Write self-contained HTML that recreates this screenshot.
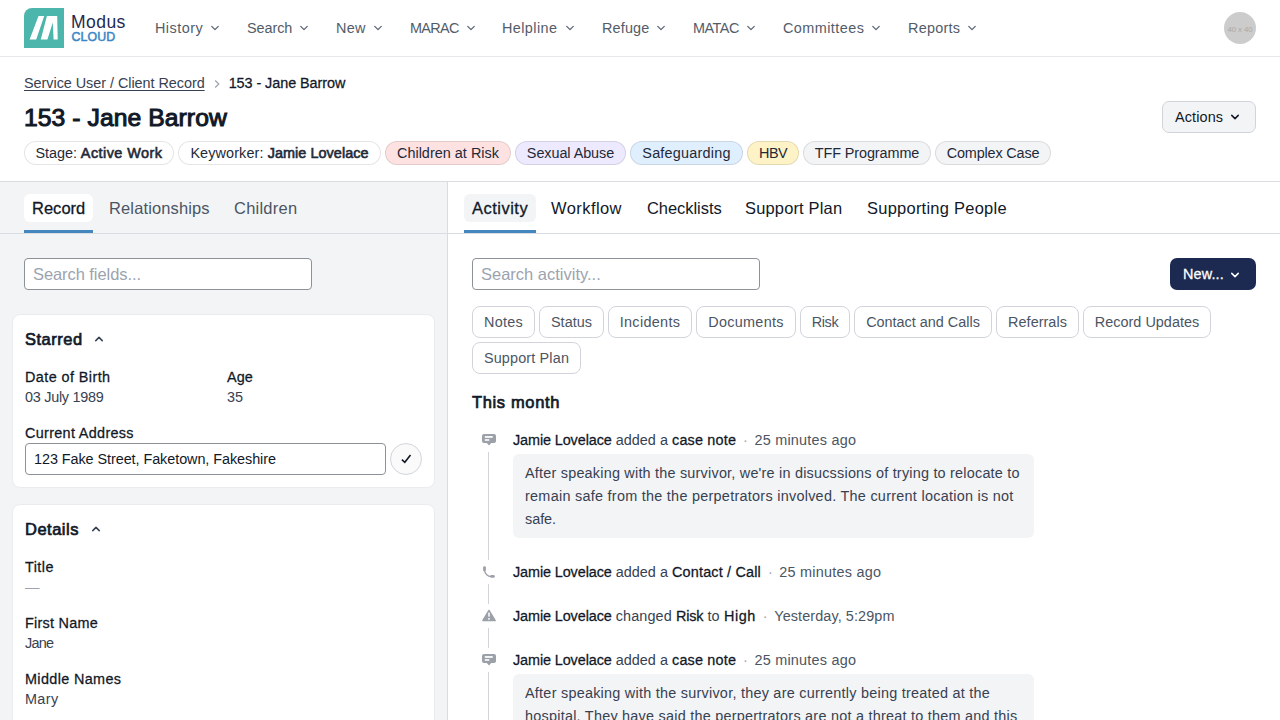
<!DOCTYPE html>
<html lang="en">
<head>
<meta charset="utf-8">
<title>153 - Jane Barrow</title>
<style>
*{box-sizing:border-box;margin:0;padding:0}
html,body{width:1280px;height:720px;overflow:hidden;background:#fff}
body{font-family:"Liberation Sans",sans-serif;font-size:14px;color:#111827;position:relative;--k:1.03}
.t{white-space:pre;position:relative;top:.03em}
.m{-webkit-text-stroke:.018em currentColor}
.sb{-webkit-text-stroke:.042em currentColor}
svg{display:block}
.abs{position:absolute}
.f14{font-size:calc(14px*var(--k))}
.f16{font-size:calc(16px*var(--k))}
/* header */
#hdr{position:absolute;left:0;top:0;width:1280px;height:57px;border-bottom:1px solid #e5e7eb;background:#fff}
#logo{position:absolute;left:24px;top:8px;width:40px;height:40px}
#lt1{position:absolute;left:71px;top:11px;font-size:calc(17px*var(--k));line-height:20px;color:#1e2a52;white-space:nowrap}
#lt2{position:absolute;left:71.5px;top:29.5px;font-size:calc(12px*var(--k));line-height:14px;color:#3a87c8;white-space:nowrap}
.nav{position:absolute;top:17px;line-height:22px;color:#535c69;white-space:nowrap}
.chv{position:absolute;top:23.1px}
#av{position:absolute;left:1224px;top:12px;width:32px;height:32px;border-radius:50%;background:#cccccc;color:#a8a8a8;font-size:calc(7.5px*var(--k));line-height:35px;text-align:center;font-weight:400;white-space:nowrap}
/* title area */
#bc{position:absolute;left:24px;top:72px;line-height:22px;white-space:nowrap;color:#374151}
#bc a{color:#374151;text-decoration:underline;text-underline-offset:1.5px;text-decoration-thickness:1px}
#bc b{color:#111827;font-weight:inherit}
#h1{position:absolute;left:24px;top:99px;font-size:calc(24px*var(--k));line-height:36px;white-space:nowrap;color:#111827}
#act{position:absolute;left:1162px;top:101px;width:94px;height:32px;border:1px solid #d1d5db;border-radius:7px;background:#f3f4f6;line-height:30px;padding-left:12px;white-space:nowrap}
.pill{position:absolute;top:141px;height:24px;line-height:22px;border:1px solid rgba(0,0,0,.1);border-radius:12px;background:#fff;text-align:center;white-space:nowrap;color:#1f2937}
/* panels */
#left{position:absolute;left:0;top:181px;width:448px;height:539px;background:#f3f4f6;border-top:1px solid #d9dce0;border-right:1px solid #d9dce0}
#right{position:absolute;left:448px;top:181px;width:832px;height:539px;background:#fff;border-top:1px solid #d9dce0}
.tabline{position:absolute;left:0;top:51px;width:100%;height:1px;background:#d9dce0}
.tab{position:absolute;top:12px;height:28px;line-height:28px;padding:0 8px;color:#4b5563;white-space:nowrap;border-radius:6px}
.tab.on{color:#111827}
.tab.on i{position:absolute;left:0;right:0;bottom:-11px;height:3px;background:#4487be}
.inp{position:absolute;height:32px;border:1px solid #8d9299;border-radius:4px;background:#fff;line-height:30px;padding-left:8px;color:#9ca3af;white-space:nowrap}
.card{position:absolute;left:12px;width:423px;background:#fff;border:1px solid #e9ebee;border-radius:8px}
.ch{position:absolute;left:12px;line-height:24px;white-space:nowrap}
.fl{position:absolute;line-height:20px;white-space:nowrap}
.fv{position:absolute;line-height:20px;color:#374151;white-space:nowrap}
/* right */
.chip{position:absolute;height:32px;line-height:30px;border:1px solid #d1d5db;border-radius:8px;text-align:center;color:#4b5563;white-space:nowrap;background:#fff}
#newb{position:absolute;left:722px;top:76px;width:86px;height:32px;border-radius:7px;background:#1c2a52;color:#fff;line-height:32px;padding-left:13px;white-space:nowrap}
.ev{position:absolute;left:65px;line-height:22px;white-space:nowrap;color:#374151}
.ev b{color:#111827;font-weight:inherit}
.ev u{text-decoration:none;color:#9ca3af}
.ev s{text-decoration:none;color:#4b5563}
.note{position:absolute;left:65px;width:521px;background:#f3f4f6;border-radius:6px;padding:8px 12px;line-height:22.75px;color:#374151;white-space:nowrap;overflow:hidden}
.note .t{display:block;width:max-content}
.vl{position:absolute;left:40px;width:1px;background:#d1d5db}
.ic{position:absolute}
</style>
</head>
<body>
<div id="hdr">
  <svg id="logo" viewBox="0 0 40 40"><path d="M8 0H40V40H0V8A8 8 0 0 1 8 0Z" fill="#4db6ac"/><path d="M14.5 8H20.2L12.2 31.4H5.6Z M22.9 8H33.2L33.7 31.4H29.6L28.8 14.5L23.4 31.4H16.8Z" fill="#fff"/></svg>
  <div id="lt1"><span class="t" style="letter-spacing:0.456px">Modus</span></div><div id="lt2"><span class="t sb" style="letter-spacing:0.081px">CLOUD</span></div>
  <div class="nav f14" style="left:155px"><span class="t" style="letter-spacing:0.465px">History</span></div>
  <div class="nav f14" style="left:247px"><span class="t" style="letter-spacing:-0.076px">Search</span></div>
  <div class="nav f14" style="left:336px"><span class="t" style="letter-spacing:0.341px">New</span></div>
  <div class="nav f14" style="left:410px"><span class="t" style="letter-spacing:-0.640px">MARAC</span></div>
  <div class="nav f14" style="left:502px"><span class="t" style="letter-spacing:0.411px">Helpline</span></div>
  <div class="nav f14" style="left:602px"><span class="t" style="letter-spacing:0.173px">Refuge</span></div>
  <div class="nav f14" style="left:693px"><span class="t" style="letter-spacing:-0.483px">MATAC</span></div>
  <div class="nav f14" style="left:783px"><span class="t" style="letter-spacing:0.445px">Committees</span></div>
  <div class="nav f14" style="left:908px"><span class="t" style="letter-spacing:0.258px">Reports</span></div>
  <svg class="chv" style="left:210px" width="10" height="10" viewBox="0 0 10 10"><path d="M1.75 3.4L5 6.65L8.25 3.4" fill="none" stroke="#5d6673" stroke-width="1.3" stroke-linecap="round" stroke-linejoin="round"/></svg><svg class="chv" style="left:298.75px" width="10" height="10" viewBox="0 0 10 10"><path d="M1.75 3.4L5 6.65L8.25 3.4" fill="none" stroke="#5d6673" stroke-width="1.3" stroke-linecap="round" stroke-linejoin="round"/></svg><svg class="chv" style="left:373px" width="10" height="10" viewBox="0 0 10 10"><path d="M1.75 3.4L5 6.65L8.25 3.4" fill="none" stroke="#5d6673" stroke-width="1.3" stroke-linecap="round" stroke-linejoin="round"/></svg><svg class="chv" style="left:465.75px" width="10" height="10" viewBox="0 0 10 10"><path d="M1.75 3.4L5 6.65L8.25 3.4" fill="none" stroke="#5d6673" stroke-width="1.3" stroke-linecap="round" stroke-linejoin="round"/></svg><svg class="chv" style="left:564.5px" width="10" height="10" viewBox="0 0 10 10"><path d="M1.75 3.4L5 6.65L8.25 3.4" fill="none" stroke="#5d6673" stroke-width="1.3" stroke-linecap="round" stroke-linejoin="round"/></svg><svg class="chv" style="left:655.75px" width="10" height="10" viewBox="0 0 10 10"><path d="M1.75 3.4L5 6.65L8.25 3.4" fill="none" stroke="#5d6673" stroke-width="1.3" stroke-linecap="round" stroke-linejoin="round"/></svg><svg class="chv" style="left:745.75px" width="10" height="10" viewBox="0 0 10 10"><path d="M1.75 3.4L5 6.65L8.25 3.4" fill="none" stroke="#5d6673" stroke-width="1.3" stroke-linecap="round" stroke-linejoin="round"/></svg><svg class="chv" style="left:870.75px" width="10" height="10" viewBox="0 0 10 10"><path d="M1.75 3.4L5 6.65L8.25 3.4" fill="none" stroke="#5d6673" stroke-width="1.3" stroke-linecap="round" stroke-linejoin="round"/></svg><svg class="chv" style="left:966.75px" width="10" height="10" viewBox="0 0 10 10"><path d="M1.75 3.4L5 6.65L8.25 3.4" fill="none" stroke="#5d6673" stroke-width="1.3" stroke-linecap="round" stroke-linejoin="round"/></svg>
  <div id="av"><span class="t" style="letter-spacing:-0.042px">40 x 40</span></div>
</div>
<div id="bc" class="f14"><a><span class="t" style="letter-spacing:-0.039px">Service User / Client Record</span></a><svg style="display:inline-block;margin:0 8px 0 8px;vertical-align:-1px" width="8" height="10" viewBox="0 0 8 10"><path d="M2.2 1.5L5.8 5L2.2 8.5" fill="none" stroke="#9ca3af" stroke-width="1.2"/></svg><b><span class="t m" style="letter-spacing:-0.064px">153 - Jane Barrow</span></b></div>
<div id="h1"><span class="t sb" style="letter-spacing:0.051px">153 - Jane Barrow</span></div>
<div id="act" class="f14"><span class="t" style="letter-spacing:0.132px">Actions</span><svg style="position:absolute;left:67.1px;top:10.1px" width="10" height="10" viewBox="0 0 10 10"><path d="M1.75 3.4L5 6.65L8.25 3.4" fill="none" stroke="#111827" stroke-width="1.5" stroke-linecap="round" stroke-linejoin="round"/></svg></div>
<div class="pill f14" style="left:24px;width:150px"><span class="t" style="letter-spacing:-0.051px">Stage: </span><span class="t sb" style="letter-spacing:0.453px">Active Work</span></div>
<div class="pill f14" style="left:178px;width:203px"><span class="t" style="letter-spacing:0.107px">Keyworker: </span><span class="t sb" style="letter-spacing:0.061px">Jamie Lovelace</span></div>
<div class="pill f14" style="left:385px;width:126px;background:#fee2e2"><span class="t" style="letter-spacing:0.024px">Children at Risk</span></div>
<div class="pill f14" style="left:515px;width:111px;background:#ede9fe"><span class="t" style="letter-spacing:-0.069px">Sexual Abuse</span></div>
<div class="pill f14" style="left:630px;width:113px;background:#e0effe"><span class="t" style="letter-spacing:0.220px">Safeguarding</span></div>
<div class="pill f14" style="left:747px;width:52px;background:#fef3c7"><span class="t" style="letter-spacing:-0.583px">HBV</span></div>
<div class="pill f14" style="left:803px;width:128px;background:#f3f4f6"><span class="t" style="letter-spacing:-0.093px">TFF Programme</span></div>
<div class="pill f14" style="left:935px;width:116px;background:#f3f4f6"><span class="t" style="letter-spacing:-0.156px">Complex Case</span></div>

<div id="left">
  <div class="tabline"></div>
  <div class="tab on f16" style="left:24px;background:#fff"><span class="t m" style="letter-spacing:0.034px">Record</span><i></i></div>
  <div class="tab f16" style="left:101px"><span class="t" style="letter-spacing:0.144px">Relationships</span></div>
  <div class="tab f16" style="left:226px"><span class="t" style="letter-spacing:0.244px">Children</span></div>
  <div class="inp f16" style="left:24px;top:76px;width:288px"><span class="t" style="letter-spacing:-0.062px">Search fields...</span></div>
  <div class="card" style="top:132px;height:174px">
    <div class="ch f16" style="top:12px"><span class="t sb" style="letter-spacing:0.513px">Starred</span></div>
    <svg class="ic" style="left:81.1px;top:18.75px" width="10" height="10" viewBox="0 0 10 10"><path d="M1.75 6.6L5 3.35L8.25 6.6" fill="none" stroke="#374151" stroke-width="1.5" stroke-linecap="round" stroke-linejoin="round"/></svg>
    <div class="fl f14" style="left:12px;top:52px"><span class="t m" style="letter-spacing:0.416px">Date of Birth</span></div>
    <div class="fv f14" style="left:12px;top:72px"><span class="t" style="letter-spacing:-0.262px">03 July 1989</span></div>
    <div class="fl f14" style="left:214px;top:52px"><span class="t m" style="letter-spacing:0.083px">Age</span></div>
    <div class="fv f14" style="left:214px;top:72px"><span class="t" style="letter-spacing:0.000px">35</span></div>
    <div class="fl f14" style="left:12px;top:108px"><span class="t m" style="letter-spacing:0.319px">Current Address</span></div>
    <div class="inp f14" style="left:12px;top:128px;width:361px;color:#111827;line-height:31.5px"><span class="t" style="letter-spacing:-0.064px">123 Fake Street, Faketown, Fakeshire</span></div>
    <div class="ic" style="left:377px;top:128px;width:32px;height:32px;border:1px solid #d1d5db;border-radius:50%;background:#fafafa"><svg style="position:absolute;left:10px;top:10px" width="11" height="11" viewBox="0 0 11 11"><path d="M0.9 5.6L3.8 8.3L9.5 0.9" fill="none" stroke="#111827" stroke-width="1.6"/></svg></div>
  </div>
  <div class="card" style="top:322px;height:260px">
    <div class="ch f16" style="top:12px"><span class="t sb" style="letter-spacing:0.504px">Details</span></div>
    <svg class="ic" style="left:77.5px;top:19px" width="10" height="10" viewBox="0 0 10 10"><path d="M1.75 6.6L5 3.35L8.25 6.6" fill="none" stroke="#374151" stroke-width="1.5" stroke-linecap="round" stroke-linejoin="round"/></svg>
    <div class="fl f14" style="left:12px;top:52px"><span class="t m" style="letter-spacing:0.428px">Title</span></div>
    <div class="fv f14" style="left:12px;top:72px;color:#9ca3af"><span class="t" style="letter-spacing:-0.406px">—</span></div>
    <div class="fl f14" style="left:12px;top:108px"><span class="t m" style="letter-spacing:0.264px">First Name</span></div>
    <div class="fv f14" style="left:12px;top:128px"><span class="t" style="letter-spacing:-0.754px">Jane</span></div>
    <div class="fl f14" style="left:12px;top:164px"><span class="t m" style="letter-spacing:0.362px">Middle Names</span></div>
    <div class="fv f14" style="left:12px;top:184px"><span class="t" style="letter-spacing:0.367px">Mary</span></div>
  </div>
</div>

<div id="right">
  <div class="tabline"></div>
  <div class="tab on f16" style="left:16px;background:#f3f4f6"><span class="t m" style="letter-spacing:0.494px">Activity</span><i></i></div>
  <div class="tab f16" style="left:95px;color:#111827"><span class="t" style="letter-spacing:0.443px">Workflow</span></div>
  <div class="tab f16" style="left:191px;color:#111827"><span class="t" style="letter-spacing:-0.044px">Checklists</span></div>
  <div class="tab f16" style="left:289px;color:#111827"><span class="t" style="letter-spacing:0.169px">Support Plan</span></div>
  <div class="tab f16" style="left:411px;color:#111827"><span class="t" style="letter-spacing:0.253px">Supporting People</span></div>
  <div class="inp f16" style="left:24px;top:76px;width:288px"><span class="t" style="letter-spacing:0.010px">Search activity...</span></div>
  <div id="newb" class="f14"><span class="t m" style="letter-spacing:0.125px">New...</span><svg style="position:absolute;left:60px;top:11.7px" width="10" height="10" viewBox="0 0 10 10"><path d="M1.75 3.4L5 6.65L8.25 3.4" fill="none" stroke="#fff" stroke-width="1.5" stroke-linecap="round" stroke-linejoin="round"/></svg></div>
  <div class="chip f14" style="left:24px;top:124px;width:63px"><span class="t" style="letter-spacing:0.228px">Notes</span></div>
  <div class="chip f14" style="left:91px;top:124px;width:65px"><span class="t" style="letter-spacing:0.029px">Status</span></div>
  <div class="chip f14" style="left:160px;top:124px;width:84px"><span class="t" style="letter-spacing:0.332px">Incidents</span></div>
  <div class="chip f14" style="left:248px;top:124px;width:100px"><span class="t" style="letter-spacing:0.288px">Documents</span></div>
  <div class="chip f14" style="left:352px;top:124px;width:50px"><span class="t" style="letter-spacing:-0.375px">Risk</span></div>
  <div class="chip f14" style="left:406.25px;top:124px;width:137.5px"><span class="t" style="letter-spacing:-0.002px">Contact and Calls</span></div>
  <div class="chip f14" style="left:548px;top:124px;width:83px"><span class="t" style="letter-spacing:0.036px">Referrals</span></div>
  <div class="chip f14" style="left:635px;top:124px;width:128px"><span class="t" style="letter-spacing:0.029px">Record Updates</span></div>
  <div class="chip f14" style="left:24px;top:160px;width:109px"><span class="t" style="letter-spacing:0.150px">Support Plan</span></div>
  <div class="ch f16" style="left:24px;top:208px"><span class="t sb" style="letter-spacing:0.658px">This month</span></div>

  <div class="vl" style="top:270px;height:108px"></div>
  <div class="vl" style="top:402px;height:20px"></div>
  <div class="vl" style="top:446px;height:20px"></div>
  <div class="vl" style="top:490px;height:60px"></div>
  <svg class="ic" style="left:33px;top:251px" width="16" height="13" viewBox="0 0 16 13"><path d="M3 1H13A2 2 0 0 1 15 3V8A2 2 0 0 1 13 10H10.2L8 12.6L5.8 10H3A2 2 0 0 1 1 8V3A2 2 0 0 1 3 1Z" fill="#9ca0a8"/><rect x="3.8" y="3.1" width="7.9" height="1.7" fill="#fff"/><rect x="3.8" y="6.2" width="4.5" height="1.6" fill="#fff"/></svg><svg class="ic" style="left:34px;top:383px" width="14" height="14" viewBox="0 0 14 14"><path d="M2.5 2.6V5" fill="none" stroke="#9ca0a8" stroke-width="2.8" stroke-linecap="round"/><path d="M2.4 5C2.8 9 6 11.6 9 11.6" fill="none" stroke="#9ca0a8" stroke-width="1.3"/><path d="M9.6 11.4H11.4" fill="none" stroke="#9ca0a8" stroke-width="2.8" stroke-linecap="round"/></svg><svg class="ic" style="left:33px;top:427px" width="16" height="13" viewBox="0 0 16 13"><path d="M8 1.4L14.2 11.6H1.8Z" fill="#9ca0a8" stroke="#9ca0a8" stroke-width="1.4" stroke-linejoin="round"/><rect x="7.25" y="3.6" width="1.5" height="4" fill="#fff"/><rect x="7.25" y="9" width="1.5" height="1.7" fill="#fff"/></svg><svg class="ic" style="left:33px;top:471px" width="16" height="13" viewBox="0 0 16 13"><path d="M3 1H13A2 2 0 0 1 15 3V8A2 2 0 0 1 13 10H10.2L8 12.6L5.8 10H3A2 2 0 0 1 1 8V3A2 2 0 0 1 3 1Z" fill="#9ca0a8"/><rect x="3.8" y="3.1" width="7.9" height="1.7" fill="#fff"/><rect x="3.8" y="6.2" width="4.5" height="1.6" fill="#fff"/></svg>
  <div class="ev f14" style="top:247px"><b><span class="t m" style="letter-spacing:-0.104px">Jamie Lovelace</span></b><span class="t" style="letter-spacing:0.030px"> added a </span><b><span class="t m" style="letter-spacing:0.179px">case note</span></b><u><span class="t" style="letter-spacing:-0.500px">  ·  </span></u><s><span class="t" style="letter-spacing:0.242px">25 minutes ago</span></s></div>
  <div class="note f14" style="top:272px"><span class="t" style="letter-spacing:0.217px">After speaking with the survivor, we're in disucssions of trying to relocate to</span><span class="t" style="letter-spacing:0.272px">remain safe from the the perpetrators involved. The current location is not</span><span class="t" style="letter-spacing:-0.041px">safe.</span></div>
  <div class="ev f14" style="top:379px"><b><span class="t m" style="letter-spacing:-0.104px">Jamie Lovelace</span></b><span class="t" style="letter-spacing:0.030px"> added a </span><b><span class="t m" style="letter-spacing:0.177px">Contact / Call</span></b><u><span class="t" style="letter-spacing:-0.500px">  ·  </span></u><s><span class="t" style="letter-spacing:0.242px">25 minutes ago</span></s></div>
  <div class="ev f14" style="top:423px"><b><span class="t m" style="letter-spacing:-0.104px">Jamie Lovelace</span></b><span class="t" style="letter-spacing:0.111px"> changed </span><b><span class="t m" style="letter-spacing:-0.188px">Risk</span></b><span class="t" style="letter-spacing:0.195px"> to </span><b><span class="t m" style="letter-spacing:0.520px">High</span></b><u><span class="t" style="letter-spacing:-0.450px">  ·  </span></u><s><span class="t" style="letter-spacing:0.098px">Yesterday, 5:29pm</span></s></div>
  <div class="ev f14" style="top:467px"><b><span class="t m" style="letter-spacing:-0.104px">Jamie Lovelace</span></b><span class="t" style="letter-spacing:0.030px"> added a </span><b><span class="t m" style="letter-spacing:0.179px">case note</span></b><u><span class="t" style="letter-spacing:-0.500px">  ·  </span></u><s><span class="t" style="letter-spacing:0.242px">25 minutes ago</span></s></div>
  <div class="note f14" style="top:492px;height:90px"><span class="t" style="letter-spacing:0.250px">After speaking with the survivor, they are currently being treated at the</span><span class="t" style="letter-spacing:0.244px">hospital. They have said the perpertrators are not a threat to them and this</span><span class="t" style="letter-spacing:0.076px">has been resolved.</span></div>
</div>
</body>
</html>
